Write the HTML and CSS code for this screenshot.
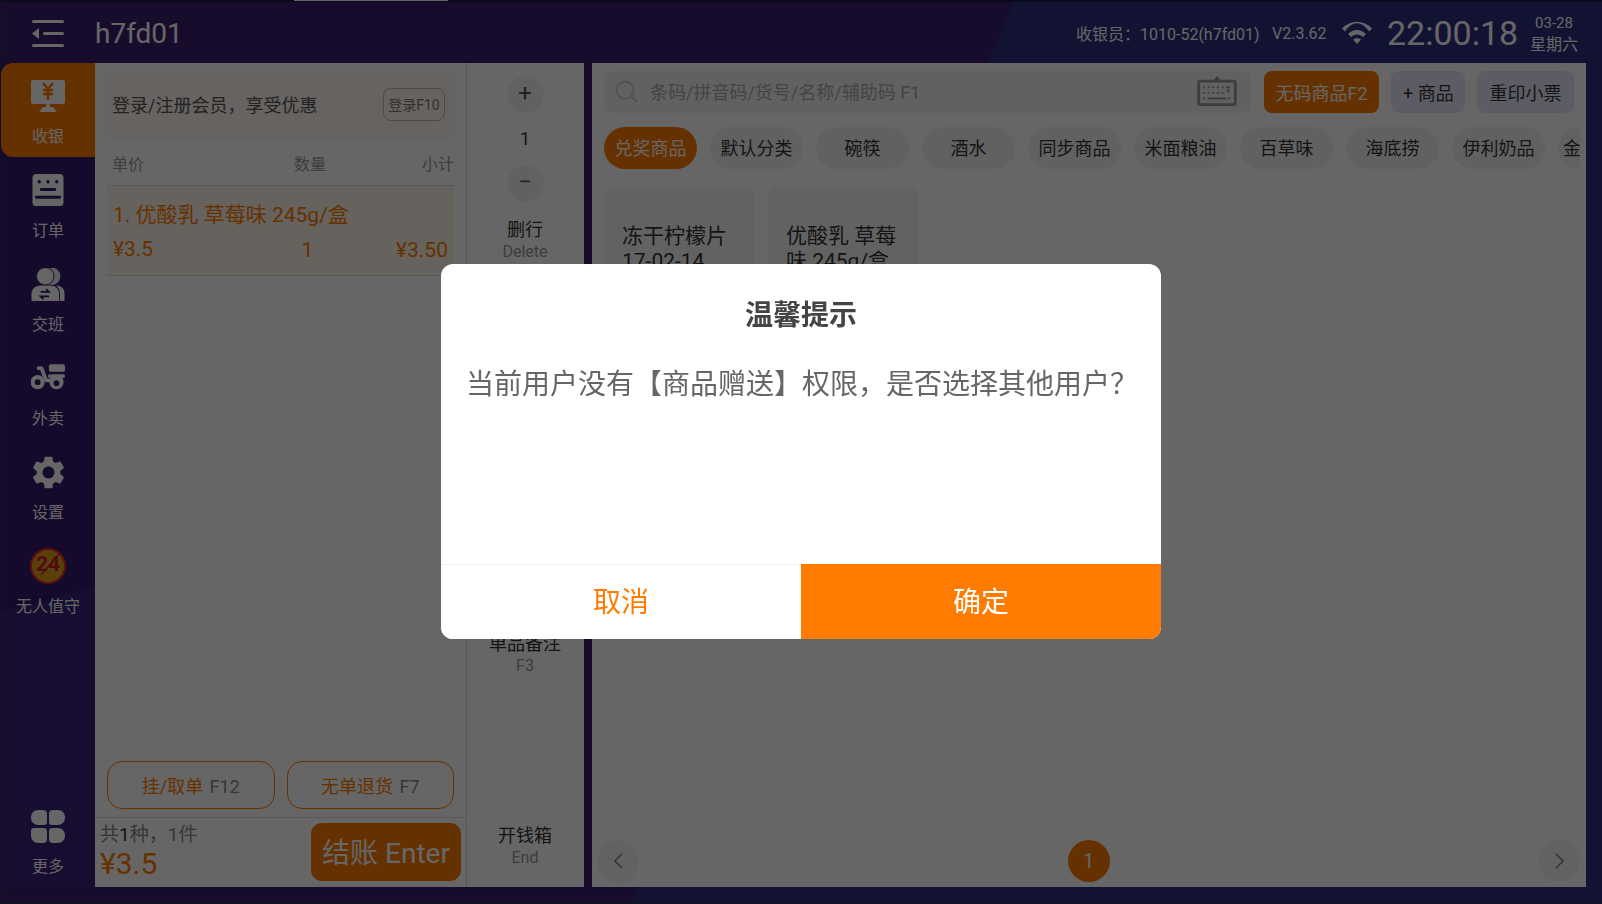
FILE: index.html
```html
<!DOCTYPE html>
<html lang="zh-CN">
<head>
  <meta charset="UTF-8">
  <title>收银</title>
  <link rel="stylesheet" href="styles.css">
</head>
<body>
  <div class="notch"></div>
  <header class="topbar">
    <svg class="menu-icon" viewBox="0 0 32 28"><rect y="0" width="32" height="3" rx="1.5"/><rect x="11" y="12" width="21" height="3" rx="1.5"/><rect y="24" width="32" height="3" rx="1.5"/><path d="M7 8v11L0 13.5z"/></svg>
    <div class="shop-name">h7fd01</div>
    <div class="top-info">
      <span class="cashier">收银员：1010-52(h7fd01)</span>
      <span class="version">V2.3.62</span>
      <svg class="wifi" viewBox="0 0 30 24"><path d="M0 7.5C8.500-1.500 21.500-1.500 30 7.500l-3 3C20-.5 10-.5 3 10.500z"/><path d="M6 13c5.500-5.500 12.500-5.500 18 0l-3 3c-3.500-3.500-8.500-3.500-12 0z"/><path d="M11 18.500c2.500-2 5.500-2 8 0L15 23z"/></svg>
      <span class="clock">22:00:18</span>
      <div class="date"><span>03-28</span><span class="week">星期六</span></div>
    </div>
  </header>

  <div class="main">
    <nav class="sidebar">
      <a class="nav-item active">
        <svg class="nav-icon" viewBox="0 0 34 33"><rect x="0" y="0" width="34" height="24" rx="2"/><path d="M15 24h4v3h-4zM8 32l4-5h10l4 5z"/><path class="cut-orange" d="M12 3l5 6 5-6M17 9v11M12 10h10M12 14h10"/></svg>
        <span>收银</span>
      </a>
      <a class="nav-item">
        <svg class="nav-icon" viewBox="0 0 34 34"><rect x="1" y="0" width="32" height="33" rx="4"/><circle class="dot" cx="8" cy="8" r="1.700"/><circle class="dot" cx="17" cy="8" r="1.700"/><circle class="dot" cx="26" cy="8" r="1.700"/><path class="cut" d="M10 16h14M5 24h24"/></svg>
        <span>订单</span>
      </a>
      <a class="nav-item">
        <svg class="nav-icon" viewBox="0 0 36 36"><circle cx="22" cy="9" r="9.500" opacity=".9"/><circle class="ring" cx="15" cy="9" r="9.500"/><path d="M0 36V28c0-6 5-9 10-9h10c6 0 10 3 10 9v8z"/><path d="M31 36V27c0-4-2-6-4-8h1c5 0 8 4 8 9v8z"/><path class="cut thin" d="M10 26h9l-3-3M19 31h-9l3 3"/></svg>
        <span>交班</span>
      </a>
      <a class="nav-item">
        <svg class="nav-icon scooter" viewBox="0 0 36 27"><rect x="19" y="0" width="17" height="8" rx="2"/><circle cx="7" cy="19" r="7.500"/><circle cx="27" cy="19" r="7.500"/><path class="body-line" d="M8 4h3l5 13h9M20 12.500h14"/><circle class="cut-fill" cx="7" cy="19" r="3"/><circle class="cut-fill" cx="27" cy="20" r="3"/></svg>
        <span>外卖</span>
      </a>
      <a class="nav-item">
        <svg class="nav-icon gear" viewBox="2 2 20 20"><path d="M19.140 12.940c.04-.3.06-.61.06-.94 0-.32-.02-.64-.07-.94l2.030-1.580a.49.49 0 0 0 .12-.61l-1.920-3.320a.488.488 0 0 0-.59-.22l-2.390.96c-.5-.38-1.030-.7-1.620-.94l-.36-2.540a.484.484 0 0 0-.48-.41h-3.840c-.24 0-.43.17-.47.41l-.36 2.540c-.59.24-1.130.57-1.620.94l-2.390-.96c-.22-.08-.47 0-.59.22L2.740 8.870c-.12.21-.08.47.12.61l2.030 1.580c-.05.3-.09.63-.09.94s.02.64.07.94l-2.030 1.580a.49.49 0 0 0-.12.61l1.920 3.320c.12.22.37.29.59.22l2.390-.96c.5.38 1.030.7 1.620.94l.36 2.540c.05.24.24.41.48.41h3.840c.24 0 .44-.17.47-.41l.36-2.540c.59-.24 1.130-.56 1.620-.94l2.390.96c.22.08.47 0 .59-.22l1.920-3.320c.12-.22.07-.47-.12-.61l-2.010-1.580zM12 15.600c-1.980 0-3.600-1.620-3.600-3.600s1.620-3.600 3.600-3.600 3.600 1.620 3.600 3.600-1.620 3.600-3.600 3.600z"/></svg>
        <span>设置</span>
      </a>
      <a class="nav-item">
        <svg class="nav-icon badge" viewBox="0 0 36 36"><circle cx="18" cy="18" r="17" fill="#e0a018" stroke="#e8262a" stroke-width="2"/><text x="18" y="23" class="badge-num">24</text><path d="M11 27L29 6" stroke="#d01c2c" stroke-width="1.500"/></svg>
        <span>无人值守</span>
      </a>
      <a class="nav-item more">
        <svg class="nav-icon" viewBox="0 0 34 33"><path d="M7 0h5a4 4 0 0 1 4 4v8a3 3 0 0 1-3 3H7a7 7 0 0 1-7-7V7a7 7 0 0 1 7-7zM22 0h5a7 7 0 0 1 7 7v1a7 7 0 0 1-7 7h-6a3 3 0 0 1-3-3V4a4 4 0 0 1 4-4zM3 18h10a3 3 0 0 1 3 3v8a4 4 0 0 1-4 4H7a7 7 0 0 1-7-7v-5a3 3 0 0 1 3-3zM21 18h6a7 7 0 0 1 7 7v1a7 7 0 0 1-7 7h-5a4 4 0 0 1-4-4v-8a3 3 0 0 1 3-3z"/></svg>
        <span>更多</span>
      </a>
    </nav>

    <section class="cart-panel">
      <div class="cart">
        <div class="member-box">
          <span>登录/注册会员，享受优惠</span>
          <button class="login-btn">登录F10</button>
        </div>
        <div class="cart-head"><span>单价</span><span class="head-qty">数量</span><span>小计</span></div>
        <div class="cart-row">
          <div class="row-title">1. 优酸乳 草莓味 245g/盒</div>
          <div class="row-nums"><span class="row-price">¥3.5</span><span class="row-qty">1</span><span class="row-sum">¥3.50</span></div>
        </div>
        <div class="cart-btns">
          <button class="line-btn">挂/取单 <em>F12</em></button>
          <button class="line-btn">无单退货 <em>F7</em></button>
        </div>
        <div class="cart-foot">
          <div class="totals">
            <div class="count">共<b>1</b>种，1件</div>
            <div class="amount">¥3.5</div>
          </div>
          <button class="pay-btn">结账 Enter</button>
        </div>
      </div>
      <aside class="actions">
        <div class="round-btn">+</div>
        <div class="qty">1</div>
        <div class="round-btn">−</div>
        <div class="act act-del"><span>删行</span><small>Delete</small></div>
        <div class="act act-note"><span>单品备注</span><small>F3</small></div>
        <div class="act act-drawer"><span>开钱箱</span><small>End</small></div>
      </aside>
    </section>

    <section class="goods-panel">
      <div class="search-row">
        <div class="search">
          <svg class="search-icon" viewBox="0 0 24 24"><circle cx="10.500" cy="10.500" r="9"/><path d="M17 17l6 6"/></svg>
          <span class="search-text">条码/拼音码/货号/名称/辅助码 F1</span>
          <svg class="kbd-icon" viewBox="0 0 42 32"><path d="M21 0l4 5h-8z" class="kbd-fill"/><rect x="1.500" y="5.500" width="39" height="25" rx="2"/><path class="kbd-keys" d="M6 12h2M11 12h2M16 12h2M21 12h2M26 12h2M31 12h4M6 18h2M11 18h2M16 18h2M21 18h2M26 18h2M33 14v4M6 24h2M11 24h20M33 24h2"/></svg>
        </div>
        <button class="top-btn orange">无码商品F2</button>
        <button class="top-btn light w-add">+ 商品</button>
        <button class="top-btn light w-print">重印小票</button>
      </div>
      <div class="tabs">
        <span class="tab on">兑奖商品</span>
        <span class="tab">默认分类</span>
        <span class="tab">碗筷</span>
        <span class="tab">酒水</span>
        <span class="tab">同步商品</span>
        <span class="tab">米面粮油</span>
        <span class="tab">百草味</span>
        <span class="tab">海底捞</span>
        <span class="tab">伊利奶品</span>
        <span class="tab tab-cut">金</span>
      </div>
      <div class="goods">
        <div class="good">冻干柠檬片17-02-14</div>
        <div class="good">优酸乳 草莓味 245g/盒</div>
      </div>
      <div class="pager">
        <div class="page-arrow"><svg viewBox="0 0 12 20"><path d="M10 2L2 10l8 8"/></svg></div>
        <div class="page-num">1</div>
        <div class="page-arrow"><svg viewBox="0 0 12 20"><path d="M2 2l8 8-8 8"/></svg></div>
      </div>
    </section>
  </div>

  <div class="mask">
    <div class="dialog">
      <h3>温馨提示</h3>
      <p>当前用户没有【商品赠送】权限，是否选择其他用户？</p>
      <div class="dialog-btns">
        <button class="btn-cancel">取消</button>
        <button class="btn-ok">确定</button>
      </div>
    </div>
  </div>
</body>
</html>
```

FILE: styles.css
```css
* {box-sizing: border-box;}
html, body {height: 100%;}
body {
  margin: 0;
  height: 904px;
  overflow: hidden;
  display: flex;
  flex-direction: column;
  border-top: 2px solid #1a1a4e;
  border-bottom: 2px solid #26305c;
  border-left: 1px solid #26305c;
  background:
    linear-gradient(113deg, #3c2070 0 934px, transparent 934px),
    #2f3080;
  font-family: Roboto, "Noto Sans CJK SC", sans-serif;
  color: #333;
}
button {font-family: inherit; border: none; padding: 0; cursor: pointer;}
.notch {position: absolute; left: 294px; top: 0; width: 154px; height: 1px; background: #fff;}

/* top bar */
.topbar {height: 61px; display: flex; align-items: center; color: #fff; flex: none;}
.menu-icon {width: 32px; height: 28px; margin-left: 31px; margin-top: 2px; fill: #fff;}
.shop-name {margin-left: 31px; font-size: 28px; margin-top: 2px; color: #fff;}
.top-info {margin-left: auto; display: flex; align-items: center; margin-top: 1px;}
.cashier {font-size: 16px; width: 196px;}
.version {font-size: 16px; width: 70px;}
.wifi {width: 30px; height: 24px; fill: #fff; margin-right: 15px;}
.clock {font-size: 34px; width: 142px;}
.date {display: flex; flex-direction: column; align-items: center; width: 50px; margin-right: 23px; margin-top: 1px; font-size: 15px; line-height: 22px;}
.week {font-size: 16px; white-space: nowrap;}

.main {flex: 1; display: flex; min-height: 0; padding-bottom: 15px;}

/* side menu */
.sidebar {
  width: 94px;
  display: flex;
  flex-direction: column;
  flex: none;
  background: linear-gradient(165deg, #351b6e 0 530px, #382278 530px);
}
.nav-item {height: 94px; display: flex; flex-direction: column; align-items: center; padding-top: 17px; color: #fff; font-size: 16px; line-height: 24px; flex: none;}
.nav-icon {width: 34px; height: 33px; fill: #fff; margin-bottom: 12px;}
.nav-item.active {background: #ff7c00; border-radius: 12px 0 0 12px;}
.nav-item.more {margin-top: auto; height: 94px;}
.scooter {height: 26px; margin-top: 2px; margin-bottom: 17px;}
.gear {width: 33px;}
.badge {width: 36px; height: 36px; margin-bottom: 11px; margin-top: -2px;}
.badge-num {font-size: 21px; font-weight: 700; fill: #d01c2c; text-anchor: middle;}
.cut {fill: none; stroke: #351b6e; stroke-width: 3; stroke-linecap: round;}
.cut.thin {stroke-width: 2; stroke-linecap: butt;}
.cut-fill {fill: #351b6e;}
.cut-orange {fill: none; stroke: #ff7c00; stroke-width: 2.500;}
.dot {fill: #351b6e;}
.ring {stroke: #351b6e; stroke-width: 1;}
.body-line {fill: none; stroke: #fff; stroke-width: 4; stroke-linecap: round; stroke-linejoin: round;}

/* cart */
.cart-panel {width: 489px; flex: none; display: flex; background: #fff;}
.cart {width: 372px; flex: none; border-right: 1px solid #ddd; display: flex; flex-direction: column; padding-top: 7px;}
.member-box {height: 70px; margin: 0 10px 0 9px; padding: 0 11px 2px 8px; background: #fff7f2; border-radius: 8px; display: flex; align-items: center; justify-content: space-between; font-size: 18px; color: #555;}
.login-btn {width: 62px; height: 33px; font-size: 14px; color: #777; background: transparent; border: 1px solid #bbb; border-radius: 8px;}
.cart-head {display: flex; height: 46px; margin: 0 12px; padding: 0 0 0 5px; align-items: center; font-size: 16px; color: #999; border-bottom: 1px solid #ddd;}
.head-qty {margin-left: 150px; margin-right: auto;}
.cart-row {height: 90px; margin: 0 12px; padding: 17px 6px 0 6px; background: #fff5ec; border-bottom: 1px solid #e3d9d2; color: #ff7c00;}
.row-title {font-size: 21px; line-height: 24px;}
.row-nums {display: flex; justify-content: space-between; font-size: 21px; line-height: 24px; margin-top: 11px;}
.row-price {position: relative; top: -1px; width: 106px;}
.cart-btns {margin-top: auto; display: flex; gap: 12px; padding: 0 12px; height: 48px;}
.line-btn {flex: 1; background: #fff; border: 1px solid #ff7c00; border-radius: 15px; color: #ff7c00; font-size: 18px;}
.line-btn em {font-style: normal; color: #888; margin-left: 2px;}
.cart-foot {height: 70px; margin-top: 8px; border-top: 1px solid #ddd; display: flex; justify-content: space-between; padding: 5px 5px 6px 5px;}
.totals {color: #888; font-size: 19px;}
.count {line-height: 24px;}
.count b {font-weight: 400; color: #333;}
.amount {color: #ff7c00; font-size: 30px; line-height: 34px;}
.pay-btn {width: 150px; height: 58px; border-radius: 11px; background: #ff7c00; color: #fff; font-size: 28px; padding-bottom: 2px;}

.actions {width: 116px; flex: none; display: flex; flex-direction: column; align-items: center; padding-top: 13px; padding-bottom: 18px;}
.round-btn {width: 37px; height: 37px; border-radius: 50%; background: #f3f3f3; font-size: 24px; line-height: 35px; text-align: center; color: #555;}
.qty {font-size: 18px; line-height: 51px; height: 52px; color: #333;}
.act {display: flex; flex-direction: column; align-items: center; height: 44px;}
.act span {font-size: 18px; line-height: 22px; color: #333;}
.act small {font-size: 16px; line-height: 22px; color: #999;}
.act-del {margin-top: 17px;}
.act-note {margin-top: 370px;}
.act-drawer {margin-top: auto;}

/* goods */
.goods-panel {width: 994px; flex: none; margin-left: 8px; background: #fff; display: flex; flex-direction: column; padding: 8px 0 5px;}
.search-row {display: flex; padding: 0 12px; height: 42px; flex: none;}
.search {width: 648px; background: #f3f3f3; border-radius: 8px; display: flex; align-items: center; padding: 0 13px 2px 11px;}
.search-icon {width: 23px; height: 23px; fill: none; stroke: #ccc; stroke-width: 2;}
.search-text {margin-left: 12px; font-size: 18px; color: #aaa;}
.kbd-icon {margin-left: auto; width: 42px; height: 30px; fill: none; stroke: #999; stroke-width: 3;}
.kbd-fill {fill: #999; stroke: none;}
.kbd-keys {stroke-width: 2;}
.top-btn {height: 42px; border-radius: 8px; font-size: 18px; white-space: nowrap;}
.top-btn.orange {width: 116px; margin-left: 13px; background: #ff7c00; color: #fff;}
.top-btn.light {background: #e6e8fa; color: #333;}
.w-add {width: 74px; margin-left: 12px;}
.w-print {width: 97px; margin-left: 12px;}
.tabs {display: flex; gap: 13px; margin: 14px 6px 0 12px; overflow: hidden; height: 42px; flex: none;}
.tab {flex: none; width: 93px; height: 42px; border-radius: 21px; background: #f3f3f3; font-size: 18px; line-height: 44px; text-align: center; color: #333;}
.tab.on {background: #ff7c00; color: #fff;}
.tab-cut {text-align: left; padding-left: 5px;}
.goods {display: flex; gap: 13px; padding: 18px 12px 0; flex: 1;}
.good {width: 151px; height: 170px; background: #f6f6f6; border-radius: 10px; padding: 37px 18px 0; font-size: 21px; line-height: 25px; color: #333;}
.pager {display: flex; justify-content: space-between; padding: 0 6px 0 5px; flex: none;}
.page-arrow {width: 42px; height: 42px; border-radius: 50%; background: #f6f6f6; display: flex; align-items: center; justify-content: center;}
.page-arrow svg {width: 11px; height: 18px; fill: none; stroke: #777; stroke-width: 1.500;}
.page-num {width: 42px; height: 42px; border-radius: 50%; background: #ff7c00; color: #fff; font-size: 20px; line-height: 42px; text-align: center;}

/* dialog */
.mask {position: fixed; inset: 0; padding-bottom: 2px; background: rgba(0,0,0,.6); display: flex; align-items: center; justify-content: center;}
.dialog {width: 720px; height: 375px; background: #fff; border-radius: 12px; overflow: hidden; display: flex; flex-direction: column;}
.dialog h3 {margin: 32px 0 0; font-size: 28px; line-height: 40px; font-weight: 700; text-align: center; color: #444;}
.dialog p {margin: 29px 0 0 25px; font-size: 28px; line-height: 40px; color: #666; white-space: nowrap;}
.dialog-btns {margin-top: auto; display: flex; height: 75px;}
.dialog-btns button {flex: 1; font-size: 28px; padding-bottom: 3px;}
.btn-cancel {background: #fff; color: #ff7c00; border-top: 1px solid #f2f2f2;}
.btn-ok {background: #ff7c00; color: #fff;}
```
